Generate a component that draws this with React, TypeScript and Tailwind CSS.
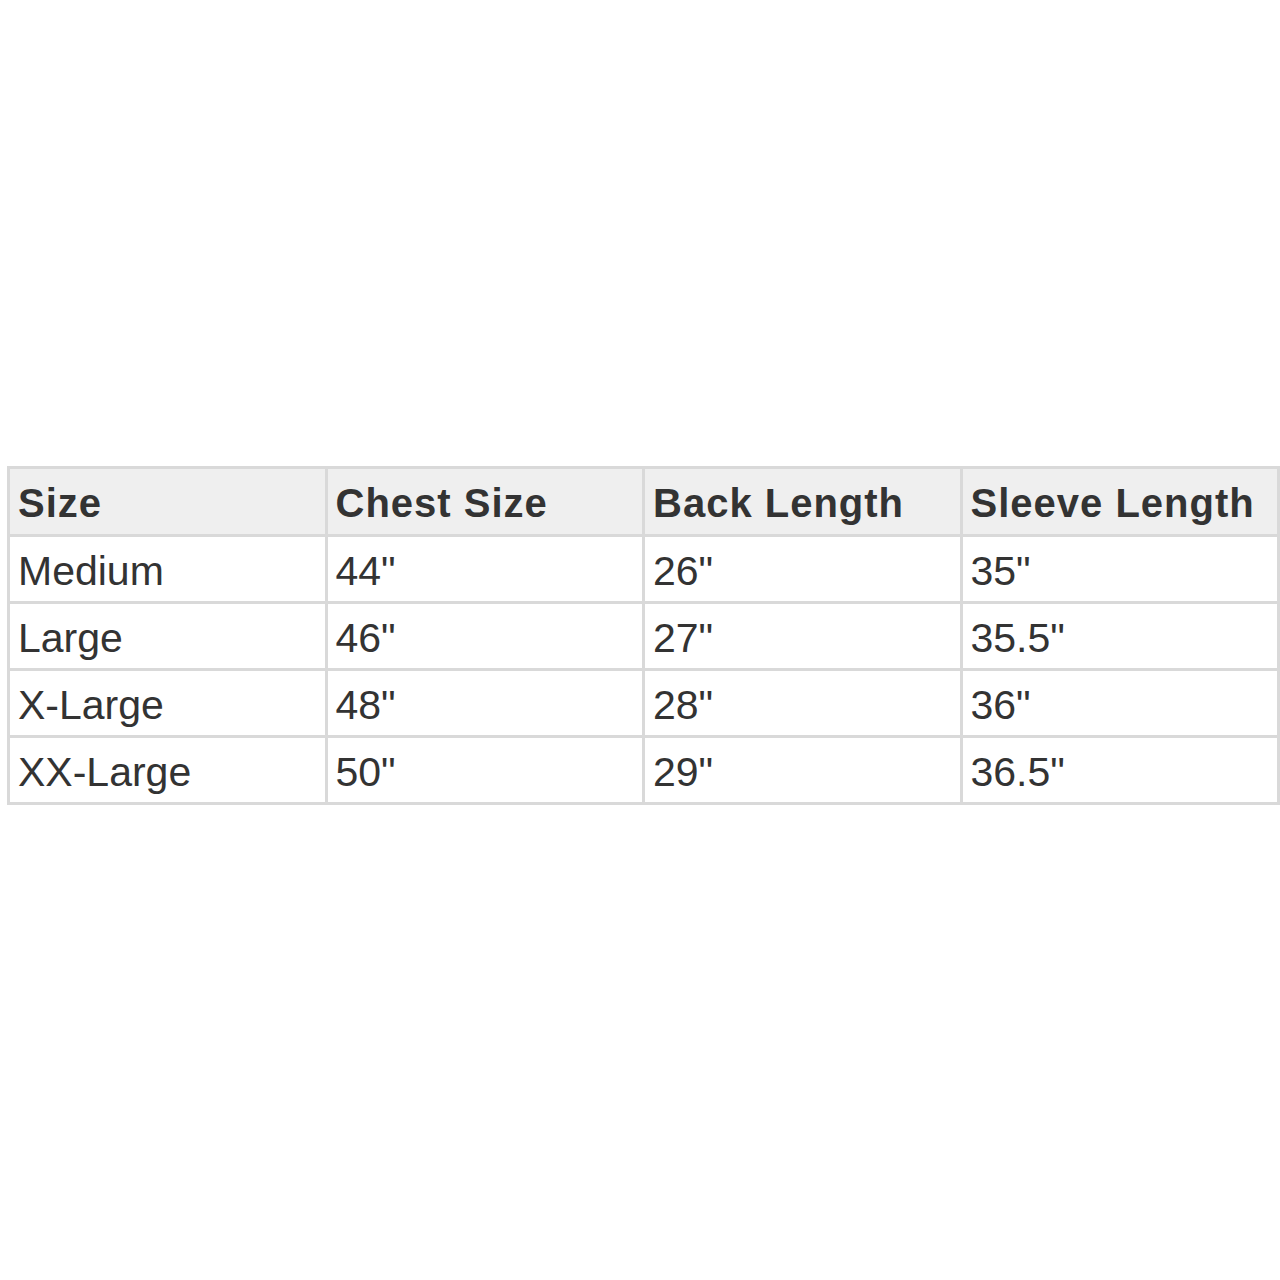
import React from "react";

const rows = [
  ["Medium", '44"', '26"', '35"'],
  ["Large", '46"', '27"', '35.5"'],
  ["X-Large", '48"', '28"', '36"'],
  ["XX-Large", '50"', '29"', '36.5"'],
];
const head = ["Size", "Chest Size", "Back Length", "Sleeve Length"];

export default function App() {
  return (
    <div
      className="w-[1280px] h-[1280px] bg-white pt-[466px] pl-[7px]"
      style={{ fontFamily: '"Liberation Sans", Arial, sans-serif' }}
    >
      <table className="border-collapse w-[1273px] table-fixed text-[#333333]">
        <thead>
          <tr className="h-[68px] bg-[#efefef]">
            {head.map((h) => (
              <th
                key={h}
                className="border-[3px] border-[#d9d9d9] text-left font-bold text-[40px] leading-[48px] tracking-[1px] pl-[8px] pt-[2px] pb-0 align-middle whitespace-nowrap"
              >
                {h}
              </th>
            ))}
          </tr>
        </thead>
        <tbody>
          {rows.map((r) => (
            <tr key={r[0]} className="h-[67px]">
              {r.map((c, i) => (
                <td
                  key={i}
                  className="border-[3px] border-[#d9d9d9] text-left text-[41px] leading-[48px] pl-[8px] pt-[3px] pb-0 align-middle"
                >
                  {c}
                </td>
              ))}
            </tr>
          ))}
        </tbody>
      </table>
    </div>
  );
}
